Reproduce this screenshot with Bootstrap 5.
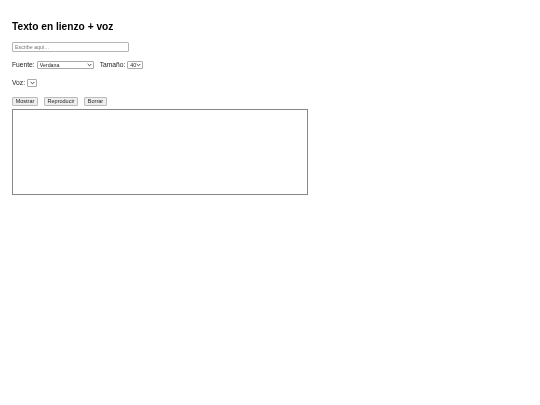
<!DOCTYPE html>
<html lang="es">
<head>
<meta charset="utf-8">
<title>Texto en lienzo + voz</title>
<link href="https://cdn.jsdelivr.net/npm/bootstrap@5.3.0/dist/css/bootstrap.min.css" rel="stylesheet">
<style>
body { font-family: "Liberation Sans", Arial, sans-serif; font-size: 6.7px; line-height: 1.15; color: #222; background: #fff; padding: 20px 12px 0; }
.hoja { filter: grayscale(1) blur(.3px); }
.ttl { font-size: 10.2px; font-weight: 700; line-height: 12px; margin: .8px 0 9.2px; color: #000; }
.linea { margin-bottom: 9px; height: 9px; align-items: center; }
.linea-txt { height: 10px; margin-bottom: 8.5px; }
.entrada { width: 117px; height: 10px; font-size: 5.3px; padding: 1px 2px; border: 1px solid #b4b4b4; border-radius: 1px; font-family: inherit; display: block; }
.entrada::placeholder { color: #777; }
.sel { appearance: none; -webkit-appearance: none; font-size: 5.3px; line-height: 6px; height: 8px; padding: 0 0 0 2px; border: 1px solid #aaa; border-radius: 1px; font-family: inherit; color: #222; background: #fff url("data:image/svg+xml,%3Csvg xmlns='http://www.w3.org/2000/svg' width='5' height='4'%3E%3Cpath d='M.7 1l1.8 1.8L4.3 1' fill='none' stroke='%23333' stroke-width='.9'/%3E%3C/svg%3E") no-repeat right 1px center; }
.sel-fuente { width: 57px; margin-left: 2px; margin-right: 6px; }
.sel-tam { width: 16px; margin-left: 2px; }
.sel-voz { width: 10px; margin-left: 2px; }
.boton { font-size: 5.5px; height: 9px; padding: 0 2px; line-height: 7px; border: 1px solid #bbb; border-radius: 1px; background: #efefef; color: #222; font-family: inherit; }
.btn-a { width: 26px; }
.btn-b { width: 34px; }
.btn-c { width: 23px; }
.fila-btn { height: 9px; margin-top: 10px; margin-bottom: 3px; gap: 6px; }
.lienzo { width: 296px; height: 86px; border: 1px solid #888; background: #fff; }
</style>
</head>
<body>
<div class="hoja">
<h1 class="ttl">Texto en lienzo + voz</h1>
<div class="linea-txt"><input class="entrada" type="text" placeholder="Escribe aquí..."></div>
<div class="linea d-flex">
  <label>Fuente:</label>
  <select class="sel sel-fuente"><option>Verdana</option></select>
  <label>Tamaño:</label>
  <select class="sel sel-tam"><option>40</option></select>
</div>
<div class="linea d-flex">
  <label>Voz:</label>
  <select class="sel sel-voz"></select>
</div>
<div class="d-flex fila-btn">
  <button class="boton btn-a" type="button">Mostrar</button>
  <button class="boton btn-b" type="button">Reproducir</button>
  <button class="boton btn-c" type="button">Borrar</button>
</div>
<canvas class="lienzo d-block"></canvas>
</div>
<script src="https://cdn.jsdelivr.net/npm/bootstrap@5.3.0/dist/js/bootstrap.bundle.min.js"></script>
</body>
</html>
